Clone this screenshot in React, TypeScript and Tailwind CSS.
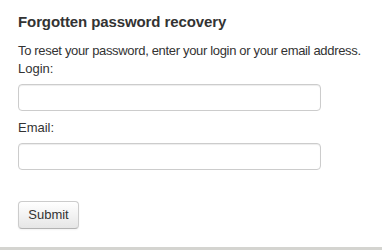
export default function App() {
  return (
    <div className="flex h-[250px] w-[382px] flex-col bg-white font-['Liberation_Sans',Arial,sans-serif] text-[#333333]">
      <div className="flex-1 px-[18px] pt-[12px]">
        <h3 className="text-[15px] leading-[20px] font-bold tracking-[-0.1px]">Forgotten password recovery</h3>
        <form className="mt-[10px] flex flex-col items-start text-[13px] leading-[18px]">
          <p className="whitespace-nowrap tracking-[-0.33px]">To reset your password, enter your login or your email address.</p>
          <label htmlFor="login">Login:</label>
          <input
            id="login"
            type="text"
            className="mt-[6px] h-[27px] w-[303px] rounded-[4px] border border-[#cccccc] px-[6px] shadow-[inset_0_1px_1px_rgba(0,0,0,0.075)] outline-none"
          />
          <label htmlFor="email" className="mt-[8px]">Email:</label>
          <input
            id="email"
            type="text"
            className="mt-[6px] h-[27px] w-[303px] rounded-[4px] border border-[#cccccc] px-[6px] shadow-[inset_0_1px_1px_rgba(0,0,0,0.075)] outline-none"
          />
          <button
            type="button"
            className="mt-[31px] h-[28px] w-[61px] rounded-[4px] border border-[#cccccc] border-b-[#b3b3b3] bg-gradient-to-b from-white to-[#e6e6e6] text-[13px] text-[#333333] shadow-[inset_0_1px_0_rgba(255,255,255,0.2),0_1px_2px_rgba(0,0,0,0.05)]"
          >
            Submit
          </button>
        </form>
      </div>
      <div className="h-[3px] bg-[#d4d4d0]" />
    </div>
  );
}
